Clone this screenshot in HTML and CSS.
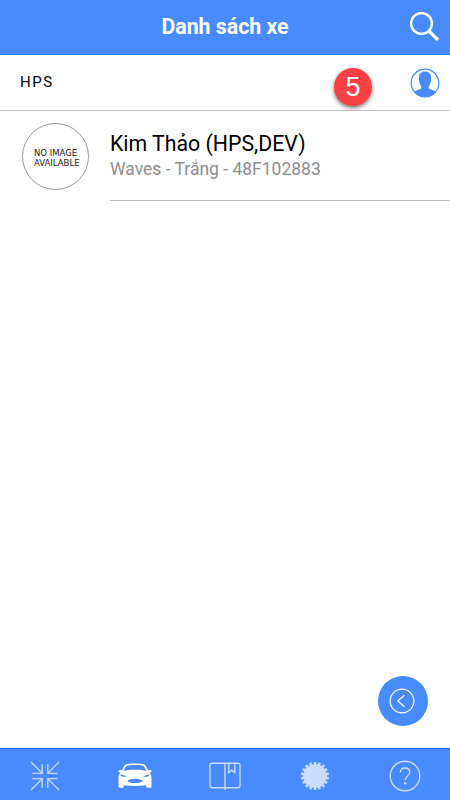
FILE: index.html
```html
<!DOCTYPE html>
<html lang="vi">
<head>
    <meta charset="utf-8">
    <meta name="viewport" content="width=device-width, initial-scale=1">
    <title>Danh sách xe</title>
    <link rel="stylesheet" href="styles.css">
</head>
<body>
<header class="header">
    <h1 class="title">Danh sách xe</h1>
    <svg class="search" width="30" height="30" viewBox="0 0 30 30">
        <circle cx="11.500" cy="11.500" r="10.400"/>
        <path class="handle" d="M18.800 18.800L28 28"/>
    </svg>
</header>

<div class="group">
    <span class="group-name">HPS</span>
    <span class="badge">5</span>
    <svg class="user" width="30" height="30" viewBox="0 0 30 30">
        <circle cx="15" cy="15" r="13.800"/>
        <path d="M15 3.500c-3.900 0-6.100 2.300-6.100 6 0 1 .1 1.700.2 2.500-.7.500-.3 2.700.8 3.300.3 1.500.8 2.400 1.500 3.200v1.700c-1.300 1.200-5.200 1.600-7.200 3.800C6.800 27.200 10.600 29 15 29s8.200-1.800 10.800-5c-2-2.200-5.900-2.600-7.200-3.800v-1.700c.7-.8 1.200-1.700 1.500-3.200 1.100-.6 1.500-2.800.8-3.300.1-.8.2-1.500.2-2.500 0-3.700-2.200-6-6.100-6z"/>
    </svg>
</div>

<main class="list">
    <div class="item">
        <div class="avatar">NO IMAGE<br>AVAILABLE</div>
        <div class="info">
            <h2 class="name">Kim Thảo (HPS,DEV)</h2>
            <p class="detail">Waves - Trắng - 48F102883</p>
        </div>
    </div>
</main>

<button class="fab">
    <svg width="26" height="26" viewBox="0 0 26 26">
        <circle cx="13" cy="13" r="11.900"/>
        <path d="M15.300 7.200L8.800 13l6.500 5.800"/>
    </svg>
</button>

<nav class="tabs">
    <a class="tab">
        <svg width="30" height="30" viewBox="0 0 30 30">
            <path d="M1 1l11 11M12.200 3.200v9.200H2.500M29 1L18 12M17.800 3.200v9.200h9.700M1 29l11-11M12.200 26.800v-9.200H2.500M29 29L18 18M17.800 26.800v-9.200h9.700"/>
        </svg>
    </a>
    <a class="tab active">
        <svg class="solid" width="34" height="26" viewBox="0 0 34 26">
            <path fill-rule="evenodd" d="M7.300 1.800C8.700.8 12 .4 17 .4s8.300.4 9.700 1.400c1.200 1 2.200 3.200 3.200 5.300 1.400-.3 3.400-.2 3.700.9.200.8-.6 1.300-2 1.500 1.300 1.600 1.900 3.300 1.900 6v7.700c0 1.100-.5 1.600-1.500 1.600h-2.200c-1 0-1.500-.5-1.500-1.600v-.9c-3.400.5-7.200.7-11.300.7s-7.900-.2-11.300-.7v.9c0 1.100-.5 1.600-1.500 1.600H2c-1 0-1.500-.5-1.500-1.600v-7.700c0-2.700.6-4.400 1.900-6C1 9.300.2 8.800.4 8c.3-1.100 2.300-1.200 3.700-.9 1-2.100 2-4.300 3.200-5.300zM8.600 3C7.500 3.800 6.400 6 5.600 7.900c3-.7 6.700-1.100 11.400-1.100s8.400.4 11.400 1.100C27.600 6 26.500 3.800 25.400 3c-.9-.6-4-.9-8.400-.9s-7.500.3-8.400.9zM2.400 11.300c.2 1.500 1.200 2.200 3 2.400l3.400.1c-1.600-1.200-3.800-2-6.400-2.500zM31.600 11.300c-2.600.5-4.800 1.300-6.400 2.500l3.400-.1c1.800-.2 2.800-.9 3-2.400zM9.300 17.900c1.400 1.500 4 2.100 7.700 2.100s6.300-.6 7.700-2.100c-1.300-1.400-3.900-2.100-7.700-2.100s-6.400.7-7.700 2.100z"/>
        </svg>
    </a>
    <a class="tab">
        <svg width="32" height="30" viewBox="0 0 32 30">
            <rect x="1" y="2.200" width="30" height="24.500" rx="2"/>
            <path d="M16 2v27M19.800 2v9.500l3-2.300 3 2.300V2"/>
        </svg>
    </a>
    <a class="tab">
        <svg width="30" height="30" viewBox="0 0 30 30">
            <circle class="gear-body" cx="15" cy="15" r="12"/>
            <circle class="gear-teeth" cx="15" cy="15" r="12.800" pathLength="360" transform="rotate(-90 15 15)"/>
        </svg>
    </a>
    <a class="tab">
        <svg width="32" height="32" viewBox="0 0 32 32">
            <circle cx="16" cy="16" r="14.800"/>
            <path d="M11.300 12.500c0-2.800 1.800-4.500 4.800-4.500s4.700 1.700 4.700 4.200c0 4-4.600 3.700-4.600 8.100"/>
            <circle class="dot" cx="16.200" cy="23.300" r="1.300"/>
        </svg>
    </a>
</nav>
</body>
</html>
```
FILE: styles.css
```css
* {
    box-sizing: border-box;
}

body {
    margin: 0;
    height: 100vh;
    display: flex;
    flex-direction: column;
    overflow: hidden;
    background: #fff;
    color: #000;
    font-family: Roboto, sans-serif;
}

svg {
    display: block;
    fill: none;
}

.header {
    display: grid;
    grid-template-columns: 1fr auto 1fr;
    align-items: center;
    flex: none;
    height: 55px;
    padding-right: 10px;
    background: #488aff;
    border-bottom: 1px solid #0a6fff;
}

.title {
    grid-column: 2;
    margin: 0 -10px 0 0;
    color: #fff;
    font-size: 21.3px;
    font-weight: 700;
    line-height: 54px;
}

.search {
    justify-self: end;
    stroke: #fff;
    stroke-width: 2.4;
}

.handle {
    stroke-width: 3.2;
}

.group {
    display: flex;
    align-items: center;
    flex: none;
    height: 56px;
    padding: 0 10px 0 20px;
    border-bottom: 1px solid #c4c4c4;
}

.group-name {
    margin-top: -1px;
    font-size: 15px;
    letter-spacing: 1.5px;
}

.badge {
    width: 38px;
    height: 38px;
    margin: 8px 38px 0 auto;
    border-radius: 50%;
    background: #fc4144;
    box-shadow: 0 2px 4px rgba(0, 0, 0, .55);
    color: #fff;
    font: 27px/38px "Liberation Sans", sans-serif;
    text-align: center;
}

.user {
    fill: #488aff;
}

.user circle {
    fill: none;
    stroke: #488aff;
    stroke-width: 1.2;
}

.list {
    flex: 1;
}

.item {
    display: flex;
    padding-left: 22px;
}

.avatar {
    width: 67px;
    height: 67px;
    margin: 12px 21px 0 0;
    padding: 24px 0 0 11px;
    border: 1px solid #999;
    border-radius: 50%;
    color: #222;
    font: 8.5px/10px "DejaVu Sans", sans-serif;
}

.info {
    flex: 1;
    height: 90px;
    padding-top: 20px;
    border-bottom: 1px solid #bcbac1;
}

.name {
    margin: 0;
    font-size: 21.3px;
    font-weight: 400;
    line-height: 26px;
}

.detail {
    margin: 0;
    color: #8e8e93;
    font-size: 17.5px;
    line-height: 24px;
}

.fab {
    display: flex;
    align-items: center;
    justify-content: center;
    align-self: flex-end;
    flex: none;
    width: 50px;
    height: 50px;
    margin: 0 22px 22px 0;
    padding: 0 2px 1px 0;
    border: 0;
    border-radius: 50%;
    background: #488aff;
    stroke: #fff;
    stroke-width: 1.2;
}

.tabs {
    display: flex;
    flex: none;
    height: 52px;
    padding-top: 2px;
    background: #488aff;
    border-top: 1px solid #0a64f0;
}

.tab {
    display: flex;
    flex: 1;
    align-items: center;
    justify-content: center;
    stroke: #c8dcff;
    stroke-width: 1.4;
}

.solid {
    fill: #fff;
    stroke: none;
}

.gear-body,
.dot {
    fill: #c8dcff;
    stroke: none;
}

/* 18 teeth, one every 20 degrees */
.gear-teeth {
    stroke-width: 2.6;
    stroke-dasharray: 11 9;
    stroke-dashoffset: 5.5;
}
```
